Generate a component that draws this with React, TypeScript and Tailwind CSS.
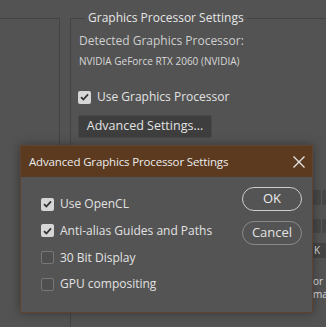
import React from "react";

const font = { fontFamily: '"Open Sans", "Noto Sans", sans-serif' };

function Check({ checked }: { checked: boolean }) {
  return checked ? (
    <span className="flex h-[13px] w-[13px] shrink-0 items-center justify-center rounded-[2px] bg-[#d6d6d6]">
      <svg width="9" height="8" viewBox="0 0 9 8">
        <path d="M1 4.2 L3.4 6.5 L8 1.4" fill="none" stroke="#333" strokeWidth="1.8" />
      </svg>
    </span>
  ) : (
    <span className="h-[13px] w-[13px] shrink-0 rounded-[2px] border border-[#777] bg-[#4f4f4f]" />
  );
}

const options = [
  { label: "Use OpenCL", checked: true },
  { label: "Anti-alias Guides and Paths", checked: true },
  { label: "30 Bit Display", checked: false },
  { label: "GPU compositing", checked: false },
];

export default function App() {
  return (
    <div
      className="relative flex h-[327px] w-[326px] overflow-hidden bg-[#535353] text-[#e2e2e2]"
      style={font}
    >
      {/* left panel edge */}
      <div className="mt-[18px] h-[140px] w-[60px] shrink-0 border-t border-r border-[#444]" />

      {/* group box */}
      <fieldset className="ml-[10px] mt-[9px] flex-1 border-t border-l border-[#444] pl-[8px]">
        <legend className="ml-[6px] px-[3px] text-[12px] leading-[18px] text-[#e6e6e6]">
          Graphics Processor Settings
        </legend>
        <div className="flex">
          <div className="flex w-[234px] shrink-0 flex-col items-start">
            <div className="mt-[5px] text-[12px] leading-[18px] text-[#cfcfcf]">
              Detected Graphics Processor:
            </div>
            <div className="mt-[4px] text-[10px] leading-[14px] text-[#d8d8d8]">
              NVIDIA GeForce RTX 2060 (NVIDIA)
            </div>
            <div className="-ml-[1px] mt-[20px] flex h-[18px] items-center gap-[6px] text-[12px]">
              <Check checked />
              <span>Use Graphics Processor</span>
            </div>
            <button className="-ml-[1px] mt-[9px] h-[23px] w-[134px] rounded-[2px] border border-[#484848] bg-[#3e3e3e] text-[12.5px] text-[#e2e2e2]">
              Advanced Settings...
            </button>
          </div>
          <div className="flex w-[40px] shrink-0 flex-col text-[10px] text-[#ddd]">
            <div className="mt-[163px] flex h-[15px] bg-[#474747]">
              <span className="w-[9px] border-r border-[#5a5a5a]" />
            </div>
            <div className="mt-[14px] flex h-[14px] bg-[#474747]">
              <span className="w-[9px] border-r border-[#5a5a5a]" />
            </div>
            <div className="mt-[10px] h-[15px] bg-[#444] pl-[1px] leading-[15px]">K</div>
            <div className="mt-[17px] leading-[13px]">or</div>
            <div className="leading-[13px]">mar</div>
          </div>
        </div>
      </fieldset>

      {/* dialog */}
      <div className="absolute left-[20px] top-[145px] flex h-[168px] w-[293px] flex-col border border-[#5e4430] bg-[#545454] shadow-[0_0_10px_rgba(0,0,0,0.35)]">
        <div className="flex h-[31px] shrink-0 items-center justify-between bg-[#5b3a1f] pl-[8px] pr-[6px]">
          <span className="text-[11.5px] tracking-[-0.15px] text-[#ececec]">
            Advanced Graphics Processor Settings
          </span>
          <svg width="14" height="14" viewBox="0 0 14 14">
            <path d="M1.5 1.5 L12.5 12.5 M12.5 1.5 L1.5 12.5" stroke="#e8e8e8" strokeWidth="1.3" />
          </svg>
        </div>
        <div className="flex flex-1 justify-between">
          <div className="flex flex-col pl-[20px] pt-[14px]">
            {options.map((o) => (
              <div key={o.label} className="flex h-[26.67px] items-center gap-[6px] text-[12px]">
                <Check checked={o.checked} />
                <span>{o.label}</span>
              </div>
            ))}
          </div>
          <div className="flex flex-col gap-[10px] pr-[10px] pt-[10px]">
            <button className="h-[24px] w-[60px] rounded-full border-[1.5px] border-[#cdcdcd] text-[13px] text-[#ececec]">
              OK
            </button>
            <button className="h-[24px] w-[60px] rounded-full border border-[#8a8a8a] text-[13px] text-[#e2e2e2]">
              Cancel
            </button>
          </div>
        </div>
      </div>
    </div>
  );
}
